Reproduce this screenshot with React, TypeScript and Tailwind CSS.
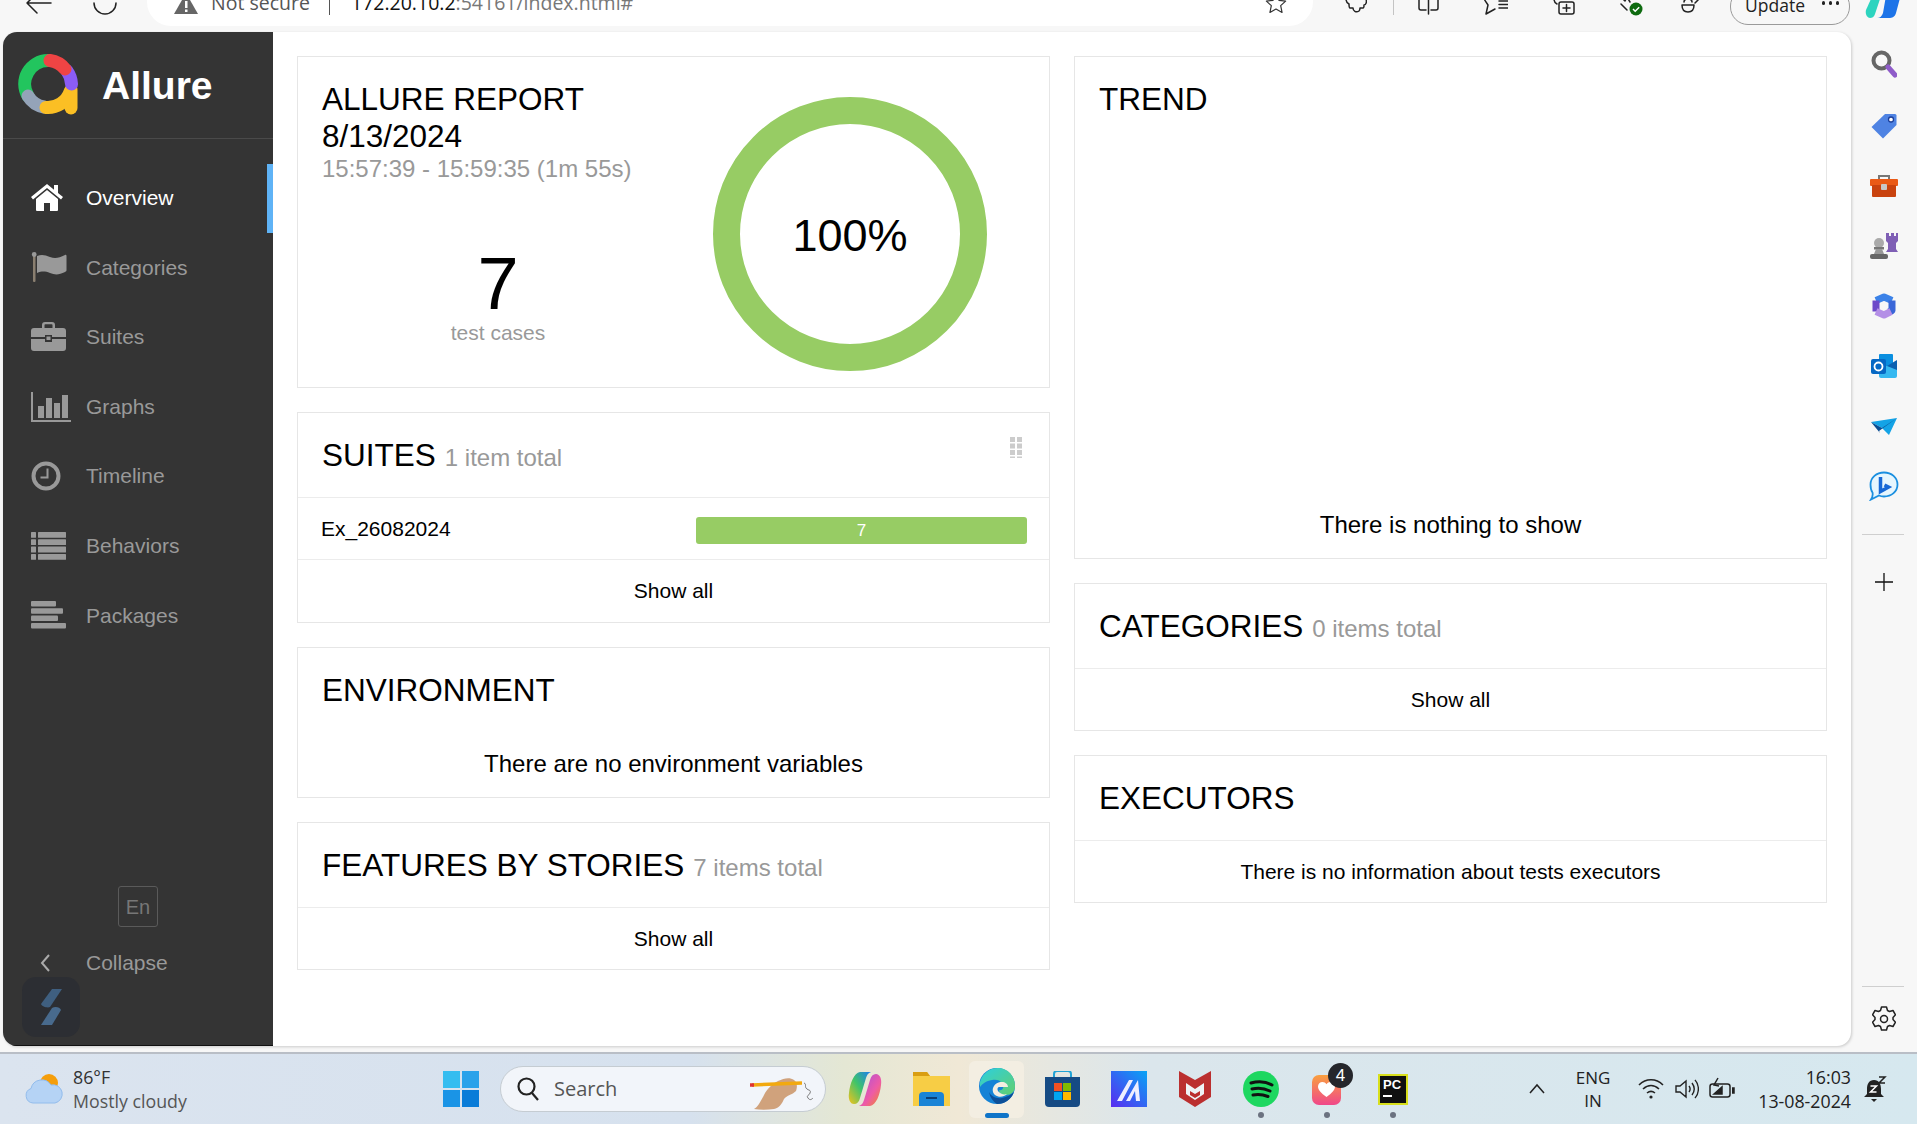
import React from "react";

const Nav = ({ icon, label, active }: { icon: React.ReactNode; label: string; active?: boolean }) => (
  <div className={`relative flex items-center h-[69.6px] pl-[28px] text-[21px] ${active ? "text-white" : "text-[#999]"}`}>
    <div className="w-[55px] flex items-center">{icon}</div>
    <span>{label}</span>
    {active && <div className="absolute right-0 top-[1px] w-[6px] h-[69px] bg-[#5fb3f6]" />}
  </div>
);

const HomeI = () => (
  <svg width="32" height="27" viewBox="0 0 32 27" fill="#fff">
    <path d="M16 6 5 15v11a1 1 0 0 0 1 1h7v-8h6v8h7a1 1 0 0 0 1-1V15z" />
    <path d="M16 0 0 13l2 2.400L16 4l14 11.400 2-2.400-5-4V1h-4v4.800z" />
  </svg>
);
const FlagI = () => (
  <svg width="36" height="30" viewBox="0 0 36 30" fill="#999">
    <rect x="2" y="2" width="2.500" height="28" rx="1" fill="#8a7f70" />
    <circle cx="3.200" cy="2.500" r="2.400" />
    <path d="M6 4c5-2 8-1 13 1 5 1.800 9 1 15-2 1-.4 1.500 0 1.500 1v14c0 1-.5 1.500-1.500 2-6 3-10 3-15 1-5-1.800-8-2-13 0z" />
  </svg>
);
const CaseI = () => (
  <svg width="35" height="29" viewBox="0 0 35 29" fill="#999">
    <path d="M11 6V3a3 3 0 0 1 3-3h7a3 3 0 0 1 3 3v3h-2.500V3a.8.8 0 0 0-.8-.8h-6.400a.8.8 0 0 0-.8.800v3z" />
    <path d="M3 6h29a3 3 0 0 1 3 3v6H21v-2h-7v2H0V9a3 3 0 0 1 3-3z" />
    <path d="M0 17h14v3h7v-3h14v9a3 3 0 0 1-3 3H3a3 3 0 0 1-3-3z" />
    <rect x="15.500" y="14.500" width="4" height="3.500" />
  </svg>
);
const ChartI = () => (
  <svg width="40" height="30" viewBox="0 0 40 30" fill="#999">
    <rect x="0" y="0" width="2" height="30" />
    <rect x="0" y="28" width="40" height="2" />
    <rect x="7" y="14" width="6" height="12" />
    <rect x="15" y="6" width="6" height="20" />
    <rect x="23" y="11" width="6" height="15" />
    <rect x="31" y="3" width="6" height="23" />
  </svg>
);
const ClockI = () => (
  <svg width="30" height="30" viewBox="0 0 30 30" fill="none">
    <circle cx="15" cy="15" r="12.500" stroke="#999" strokeWidth="4" />
    <path d="M16.500 7.500v9h-7" stroke="#999" strokeWidth="2" />
  </svg>
);
const ListI = () => (
  <svg width="35" height="28" viewBox="0 0 35 28" fill="#999">
    {[0, 7.300, 14.600, 21.900].map((y) => (
      <g key={y}>
        <rect x="0" y={y} width="5" height="5.800" rx="0.500" />
        <rect x="7" y={y} width="28" height="5.800" rx="0.500" />
      </g>
    ))}
  </svg>
);
const PackI = () => (
  <svg width="35" height="28" viewBox="0 0 35 28" fill="#999">
    <rect y="0" width="25" height="5.500" rx="1" />
    <rect y="7.300" width="32" height="5.500" rx="1" />
    <rect y="14.600" width="27" height="5.500" rx="1" />
    <rect y="21.900" width="35" height="5.500" rx="1" />
  </svg>
);

const Logo = () => (
  <svg width="60" height="61" viewBox="0 0 60 61" fill="none" strokeWidth="13" strokeLinecap="round">
    <path d="M53 36V54" stroke="#fbbf24" />
    <path d="M10 42A23.500 23.500 0 0 1 30 6.500" stroke="#22c55e" />
    <path d="M10 42A23.500 23.500 0 0 0 26 53" stroke="#94a3b8" />
    <path d="M28 53.500A23.500 23.500 0 0 0 52 38" stroke="#fbbf24" />
    <path d="M53.500 30A23.500 23.500 0 0 0 49 17" stroke="#8b5cf6" />
    <path d="M47 15A23.500 23.500 0 0 0 32 6.500" stroke="#ef4444" />
  </svg>
);

const Card = ({ className = "", children }: { className?: string; children: React.ReactNode }) => (
  <div className={`border border-[#e6e6e6] bg-white ${className}`}>{children}</div>
);

const Head = ({ title, sub, className = "h-[84px]" }: { title: string; sub?: string; className?: string }) => (
  <div className={`flex items-center pl-[24px] ${className}`}>
    <span className="text-[31.500px] leading-[37px] text-black">{title}</span>
    {sub && <span className="ml-[9px] mt-[5px] text-[24px] text-[#999]">{sub}</span>}
  </div>
);

const Foot = ({ children }: { children: React.ReactNode }) => (
  <div className="flex-1 flex items-center justify-center border-t border-[#ececec] text-[21px] text-black">{children}</div>
);

const Rail = ({ y, children }: { y: string; children: React.ReactNode }) => (
  <div className={`flex items-center justify-center ${y}`}>{children}</div>
);

const Slot = ({ className = "", children }: { className?: string; children?: React.ReactNode }) => (
  <div className={`relative shrink-0 flex items-center justify-center ${className}`}>{children}</div>
);

const line = { fill: "none", stroke: "#222", strokeWidth: 1.500, strokeLinecap: "round" as const, strokeLinejoin: "round" as const };

export default function App() {
  return (
    <div className="w-[1917px] h-[1124px] overflow-hidden flex flex-col bg-[#f7f7f7] font-['Liberation_Sans',Arial,sans-serif]">
      {/* browser bar */}
      <div className="h-[32px] shrink-0 flex items-start font-['Open_Sans',sans-serif]">
        <svg className="ml-[26px] shrink-0" width="26" height="14" viewBox="0 0 26 14" {...line}>
          <path d="M25 3H1M11 -7 1 3l10 10" />
        </svg>
        <svg className="ml-[41px] shrink-0" width="24" height="16" viewBox="0 0 24 16" {...line}>
          <path d="M1 3a11 11 0 0 0 22 0" />
        </svg>
        <div className="ml-[30px] w-[1166px] h-[26px] bg-white rounded-b-[24px] flex items-start overflow-hidden shrink-0">
          <svg className="ml-[26px] shrink-0 mt-[-8px]" width="26" height="24" viewBox="0 0 26 24">
            <path d="M13 1 25 22H1z" fill="#666" />
            <rect x="12" y="9" width="2.500" height="7" fill="#fff" />
            <rect x="12" y="17.500" width="2.500" height="2.500" fill="#fff" />
          </svg>
          <span className="ml-[12px] mt-[-10px] w-[100px] text-[19.500px] leading-[26px] text-[#555] whitespace-nowrap shrink-0">Not secure</span>
          <div className="ml-[18px] w-px h-[15px] bg-[#555] shrink-0" />
          <span className="ml-[21px] mt-[-10px] w-[282px] text-[19.500px] leading-[26px] whitespace-nowrap text-[#111] shrink-0">172.20.10.2<span className="text-[#777]">:54161/index.html#</span></span>
          <svg className="ml-[632px] mt-[-7px] shrink-0" width="22" height="22" viewBox="0 0 24 24" fill="none" stroke="#333" strokeWidth="1.300" strokeLinejoin="round">
            <path d="M12 1l3.200 7 7.300.8-5.400 5 1.500 7.400L12 17.500 5.400 21.200 6.900 13.800 1.500 8.800 8.800 8z" />
          </svg>
        </div>
        <svg className="ml-[32px] mt-[-1px] shrink-0" width="22" height="16" viewBox="0 0 22 16" {...line}>
          <path d="M1 0c0 3 1 4 3 5 0 3 0 4 1 4h3c0 3 3 5 6 3 1-1 1-2 1-3h3c1 0 1-2 1-3 2 0 3-3 2-6" />
        </svg>
        <div className="ml-[26px] w-px h-[15px] bg-[#c4c4c4] shrink-0" />
        <svg className="ml-[23px] mt-[-1px] shrink-0" width="23" height="16" viewBox="0 0 23 16" {...line}>
          <path d="M2 0v9a2 2 0 0 0 2 2h5M21 0v9a2 2 0 0 1-2 2h-5M11.500 0v15" />
        </svg>
        <svg className="ml-[44px] mt-[-1px] shrink-0" width="24" height="16" viewBox="0 0 24 16" {...line}>
          <path d="M0 0l4 6-2 9 9-5M15 2h9M15 5.500h9M15 9h9" />
        </svg>
        <svg className="ml-[45px] mt-[-1px] shrink-0" width="22" height="16" viewBox="0 0 22 16" {...line}>
          <rect x="6" y="3" width="15" height="12" rx="2" />
          <path d="M13.500 5.500v7M10 9h7M1 0c0 2 1 4 3 5" />
        </svg>
        <svg className="ml-[41px] mt-[-4px] shrink-0" width="27" height="20" viewBox="0 0 27 20">
          <path d="M1 3l5-1 3 3 2-4 3 5M5 8l6 6" {...line} />
          <circle cx="20" cy="13" r="6.500" fill="#0e6b10" />
          <path d="M17 13l2.200 2.200 4-4" fill="none" stroke="#fff" strokeWidth="1.500" />
        </svg>
        <svg className="ml-[38px] mt-[-1px] shrink-0" width="19" height="16" viewBox="0 0 19 16" {...line}>
          <path d="M1 6h12c0 5-2 7-6 7S1 11 1 6zM3 3c0-4 8-4 8 0M14 4l4-4" />
        </svg>
        <div className="ml-[30px] mt-[-12px] w-[120px] h-[37px] rounded-[18px] border border-[#9a9a9a] flex items-center pl-[14px] shrink-0">
          <span className="text-[17.500px] text-[#222] leading-[22px] mt-[-4px]">Update</span>
          <div className="ml-[17px] mt-[-7px] flex gap-[3.500px]">
            <div className="w-[3.500px] h-[3.500px] rounded-full bg-[#222]" />
            <div className="w-[3.500px] h-[3.500px] rounded-full bg-[#222]" />
            <div className="w-[3.500px] h-[3.500px] rounded-full bg-[#222]" />
          </div>
        </div>
        <svg className="ml-[15px] mt-[-10px] shrink-0" width="37" height="30" viewBox="0 0 37 30">
          <path d="M10 0h8L10 24c-1 3-3 4-5 4-3 0-5-4-4-8z" fill="#2dd4bf" />
          <path d="M22 0h8c4 0 6 4 5 8l-4 15c-1 4-4 5-7 5H12c3 0 5-2 6-5z" fill="#1d74e8" />
        </svg>
      </div>

      {/* main + rail */}
      <div className="h-[1020px] shrink-0 flex items-start">
        <div className="ml-[3px] w-[1848px] h-[1014px] rounded-[14px] bg-white overflow-hidden flex shadow-[1px_1px_3px_rgba(0,0,0,0.18)]">
          {/* sidebar */}
          <div className="relative w-[270px] shrink-0 h-full bg-[#343434] flex flex-col border-b border-[#111]">
            <div className="h-[107px] shrink-0 flex items-center border-b border-[#4a4a4a] pl-[15px]">
              <div className="mt-[-1px]"><Logo /></div>
              <span className="ml-[24px] text-[39px] font-bold text-white leading-none">Allure</span>
            </div>
            <div className="pt-[24px]">
              <Nav active icon={<HomeI />} label="Overview" />
              <Nav icon={<FlagI />} label="Categories" />
              <Nav icon={<CaseI />} label="Suites" />
              <Nav icon={<ChartI />} label="Graphs" />
              <Nav icon={<ClockI />} label="Timeline" />
              <Nav icon={<ListI />} label="Behaviors" />
              <Nav icon={<PackI />} label="Packages" />
            </div>
            <div className="mt-[236px] ml-[115px] w-[40px] h-[41px] rounded-[3px] border border-[#5a5a5a] flex items-center justify-center text-[20px] text-[#777]">En</div>
            <div className="mt-[22px] h-[28px] flex items-center text-[21px] text-[#999]">
              <svg className="ml-[36px] shrink-0" width="12" height="20" viewBox="0 0 12 20" fill="none" stroke="#aaa" strokeWidth="2">
                <path d="M10 2 3 10l7 8" />
              </svg>
              <span className="ml-[35px]">Collapse</span>
            </div>
            <div className="absolute left-[19px] top-[945px] w-[58px] h-[60px] rounded-[14px] bg-[#2c2e33] flex items-center justify-center">
              <svg width="26" height="36" viewBox="0 0 26 36" fill="#3f5f80">
                <path d="M14 0h10L12 18c-2 1-8 0-9-3z" />
                <path d="M14 36H3l11-17c3-2 8-1 9 2z" fill="#486a8d" />
              </svg>
            </div>
          </div>
          {/* content */}
          <div className="flex-1 pt-[24px] pl-[24px] flex gap-[24px] items-start">
            <div className="w-[753px] flex flex-col gap-[24px]">
              <Card className="relative h-[332px]">
                <div className="pl-[24px] pt-[24px] text-[31.500px] leading-[36.500px] text-black">
                  ALLURE REPORT
                  <br />
                  8/13/2024
                  <div className="text-[24px] leading-[28px] mt-[1px] text-[#999]">15:57:39 - 15:59:35 (1m 55s)</div>
                </div>
                <div className="w-[400px] text-center mt-[64px]">
                  <div className="text-[74px] leading-[74px] text-black">7</div>
                  <div className="text-[21px] leading-[24px] text-[#999]">test cases</div>
                </div>
                <div className="absolute left-[415px] top-[40px] w-[274px] h-[274px] rounded-full border-[27px] border-[#97cc64] flex items-center justify-center pt-[4px] text-[45px] text-black">100%</div>
              </Card>
              <Card className="h-[211px] flex flex-col">
                <div className="relative">
                  <Head title="SUITES" sub="1 item total" />
                  <svg className="absolute right-[27px] top-[24px]" width="12" height="24" viewBox="0 0 12 24" fill="#ccc">
                    {[0, 6.500, 13, 19.500].map((y) => (
                      <g key={y}>
                        <rect x="0" y={y} width="5" height={y > 15 ? 1.500 : 5} />
                        <rect x="7" y={y} width="5" height={y > 15 ? 1.500 : 5} />
                      </g>
                    ))}
                  </svg>
                </div>
                <div className="h-[62px] border-t border-[#ececec] flex items-center pl-[23px] pr-[22px] text-[21px] text-black">
                  <span className="w-[375px]">Ex_26082024</span>
                  <div className="flex-1 h-[27px] mt-[4px] rounded-[3px] bg-[#97cc64] flex items-center justify-center text-[17px] text-white">7</div>
                </div>
                <Foot>Show all</Foot>
              </Card>
              <Card className="h-[151px] flex flex-col">
                <Head title="ENVIRONMENT" />
                <div className="text-center text-[24px] leading-[28px] text-black mt-[18px]">There are no environment variables</div>
              </Card>
              <Card className="h-[148px] flex flex-col">
                <Head title="FEATURES BY STORIES" sub="7 items total" />
                <Foot>Show all</Foot>
              </Card>
            </div>
            <div className="w-[753px] flex flex-col gap-[24px]">
              <Card className="h-[503px] flex flex-col">
                <Head title="TREND" />
                <div className="mt-auto mb-[19px] text-center text-[24px] leading-[28px] text-black">There is nothing to show</div>
              </Card>
              <Card className="h-[148px] flex flex-col">
                <Head title="CATEGORIES" sub="0 items total" />
                <Foot>Show all</Foot>
              </Card>
              <Card className="h-[148px] flex flex-col">
                <Head title="EXECUTORS" />
                <Foot>There is no information about tests executors</Foot>
              </Card>
            </div>
          </div>
        </div>

        {/* right rail */}
        <div className="w-[66px] shrink-0 h-[1014px] flex flex-col">
          <Rail y="h-[30px] mt-[17px]">
            <svg width="26" height="28" viewBox="0 0 26 28" fill="none">
              <circle cx="10.500" cy="10.500" r="8" stroke="#666" strokeWidth="4" />
              <path d="M17 17l7 8" stroke="#8f5cc9" strokeWidth="5" strokeLinecap="round" />
            </svg>
          </Rail>
          <Rail y="h-[30px] mt-[32px]">
            <svg width="26" height="26" viewBox="0 0 26 26">
              <path d="M14 1h10a1.500 1.500 0 0 1 1.500 1.500V12L12 25.500 .5 14z" fill="#4f83e3" />
              <circle cx="20" cy="6.500" r="2.500" fill="#fff" stroke="#1d3f9a" strokeWidth="1.300" />
            </svg>
          </Rail>
          <Rail y="h-[30px] mt-[30px]">
            <svg width="28" height="24" viewBox="0 0 28 24">
              <path d="M9 6V2h10v4" fill="none" stroke="#777" strokeWidth="2" />
              <rect y="5" width="28" height="7" rx="1" fill="#ea5a16" />
              <rect x="2" y="11" width="24" height="12" rx="1" fill="#c9430f" />
              <rect x="11" y="10" width="6" height="6" rx="1" fill="#c8c8c8" />
            </svg>
          </Rail>
          <Rail y="h-[30px] mt-[30px]">
            <svg width="28" height="26" viewBox="0 0 28 26">
              <path d="M16 0h3v3h2V0h3v3h2V0h2v8l-2 2v6l2 3H16l2-3v-6l-2-2z" fill="#7f5fb5" />
              <circle cx="9" cy="10" r="5" fill="#aaa" />
              <rect x="4" y="14" width="10" height="2.500" fill="#777" />
              <path d="M6 16h6l2 5H4z" fill="#999" />
              <rect x="0" y="21" width="18" height="5" rx="2" fill="#666" />
            </svg>
          </Rail>
          <Rail y="h-[30px] mt-[30px]">
            <svg width="26" height="26" viewBox="0 0 26 26" fill="none" strokeWidth="7" strokeLinejoin="round">
              <path d="M5 7.500 13 4l8 3.500" stroke="#3b82e8" />
              <path d="M21 7.500v10l-3 1.500" stroke="#3a66d8" />
              <path d="M5 18.500V7.500" stroke="#6d49c9" />
              <path d="M5 18.500 13 22l7-3.500" stroke="#b48fe6" />
            </svg>
          </Rail>
          <Rail y="h-[30px] mt-[30px]">
            <svg width="26" height="24" viewBox="0 0 26 24">
              <rect x="8" y="0" width="14" height="22" rx="1" fill="#0a8fe0" />
              <path d="M8 12h18v10a2 2 0 0 1-2 2H10a2 2 0 0 1-2-2z" fill="#35b8f0" />
              <path d="M16 12l10-6v10z" fill="#0a5fb0" />
              <rect x="0" y="5" width="15" height="15" rx="2" fill="#0668c4" />
              <circle cx="7.500" cy="12.500" r="4" fill="none" stroke="#fff" strokeWidth="1.800" />
            </svg>
          </Rail>
          <Rail y="h-[30px] mt-[30px]">
            <svg className="mt-[2px]" width="26" height="18" viewBox="0 0 26 18">
              <path d="M0 4 26 0l-8 17-7-7z" fill="#14a3e6" />
              <path d="M0 4l11 6 15-10-18 13 1 2z" fill="#0b4e93" />
            </svg>
          </Rail>
          <Rail y="h-[30px] mt-[30px]">
            <svg width="30" height="30" viewBox="0 0 30 30" fill="none">
              <path d="M15 1.500c7.500 0 13.500 5 13.500 12s-6 12-13.500 12c-2 0-3.500-.3-5-1L2 28.500c1.500-2.500 2-5 1.500-7C2 19.500 1.500 16 1.500 13.500 1.500 6.500 7.500 1.500 15 1.500z" fill="#e6f6fe" stroke="#1a8fe0" strokeWidth="1.800" />
              <path d="M11.500 6v14.500l8-4.500-4-2" stroke="#1668d6" strokeWidth="3.500" />
            </svg>
          </Rail>
          <div className="ml-[11px] mt-[33px] w-[42px] h-px bg-[#cfcfcf]" />
          <Rail y="h-[30px] mt-[32px]">
            <svg width="20" height="20" viewBox="0 0 20 20" stroke="#111" strokeWidth="1.300"><path d="M10 1v18M1 10h18" /></svg>
          </Rail>
          <div className="ml-[11px] mt-[389px] w-[42px] h-px bg-[#cfcfcf]" />
          <Rail y="h-[30px] mt-[17px]">
            <svg width="24" height="26" viewBox="0 0 24 26" fill="none" stroke="#222" strokeWidth="1.500" strokeLinejoin="round">
              <path d="M9.500 1h5l1 3.500 2 1 3.500-1 2.500 4.300-2.500 2.600v2.200l2.500 2.600-2.500 4.300-3.500-1-2 1-1 3.500h-5l-1-3.500-2-1-3.500 1L.5 16.200 3 13.600v-2.200L.5 8.800 3 4.500l3.500 1 2-1z" />
              <circle cx="12" cy="13" r="3.500" />
            </svg>
          </Rail>
        </div>
      </div>

      {/* taskbar */}
      <div className="h-[72px] shrink-0 border-t-[2px] border-[#b9bec6] flex items-center bg-[linear-gradient(90deg,#dbe4ef_0%,#d6e1ee_36%,#e4e7d4_44%,#f0e8d6_50%,#dbe6ec_60%,#d6e8ef_100%)] font-['Open_Sans',sans-serif]">
        <Slot className="w-[38px] h-[30px] ml-[25px]">
          <svg width="38" height="30" viewBox="0 0 38 30">
            <circle cx="24" cy="9" r="9" fill="#f59e0b" />
            <path d="M8 29a7.500 7.500 0 0 1-2-14.500A11 11 0 0 1 26 11a9 9 0 0 1 4 18z" fill="#b5d3f5" stroke="#92bcec" />
          </svg>
        </Slot>
        <div className="ml-[10px] w-[120px] text-[17.800px] leading-[24px] text-[#333] whitespace-nowrap">
          <div>86°F</div>
          <div className="text-[#555]">Mostly cloudy</div>
        </div>
        <Slot className="ml-[250px] w-[36px] h-[36px]">
          <svg width="36" height="36" viewBox="0 0 36 36">
            <rect x="0" y="0" width="17" height="17" fill="#35bdf0" />
            <rect x="19" y="0" width="17" height="17" fill="#2aa2ea" />
            <rect x="0" y="19" width="17" height="17" fill="#1a94e6" />
            <rect x="19" y="19" width="17" height="17" fill="#0a7cd8" />
          </svg>
        </Slot>
        <div className="ml-[21px] w-[326px] h-[46px] rounded-[23px] bg-[#f2f5fa] border border-[#c5ccd2] flex items-center relative shrink-0">
          <svg className="ml-[15px] shrink-0" width="24" height="26" viewBox="0 0 24 26" fill="none" stroke="#222" strokeWidth="2.200">
            <circle cx="10.500" cy="10.500" r="8" />
            <path d="M16 17l6 7" />
          </svg>
          <span className="ml-[14px] text-[20px] text-[#555]">Search</span>
          <svg className="absolute left-[249px] top-[6px]" width="72" height="38" viewBox="0 0 72 38">
            <path d="M4 36c3-1 7-8 10-14 3-6 8-11 14-14 6-3 12-4 16-1 4 3 3 8 2 11-4 4-9 4-12 8-2 5-5 9-10 10-7 1-14 1-20 0z" fill="#d0a27c" />
            <path d="M2 12 52 10" stroke="#f2a90f" strokeWidth="3.500" />
            <path d="M0 12h4" stroke="#d33" strokeWidth="3.500" />
            <path d="M54 10c3 1 0 4 3 6s4 1 3 4-4 2-2 5 4 1 5 0" fill="none" stroke="#777" />
          </svg>
        </div>
        <Slot className="ml-[21px] w-[36px] h-[36px]">
          <svg width="36" height="36" viewBox="0 0 36 36">
            <defs>
              <linearGradient id="cp" x1="0" y1="0" x2="1" y2="1">
                <stop offset="0" stopColor="#a34fe0" />
                <stop offset="0.600" stopColor="#ee5ba6" />
                <stop offset="1" stopColor="#f08a24" />
              </linearGradient>
              <linearGradient id="cq" x1="0" y1="1" x2="1" y2="0">
                <stop offset="0" stopColor="#f4c21c" />
                <stop offset="0.500" stopColor="#3fc46a" />
                <stop offset="1" stopColor="#1d7cf0" />
              </linearGradient>
            </defs>
            <path d="M13 1h11c-3 1-4 3-5 6l-6 20c-1 4-3 6-6 6-4 0-6-5-5-11C3 12 7 2 13 1z" fill="url(#cq)" />
            <path d="M23 35H12c3-1 4-3 5-6l6-20c1-4 3-6 6-6 4 0 6 5 5 11-1 10-5 20-11 21z" fill="url(#cp)" />
          </svg>
        </Slot>
        <Slot className="ml-[30px] w-[37px] h-[34px]">
          <svg width="37" height="34" viewBox="0 0 37 34">
            <path d="M0 0h14l3 4h20v30H0z" fill="#f7cd45" />
            <path d="M0 0h14l3 4H0z" fill="#d99e12" />
            <path d="M6 24a4 4 0 0 1 4-4h17a4 4 0 0 1 4 4v10H6z" fill="#1a84d6" />
            <rect x="13" y="25" width="11" height="2" fill="#0c3f75" />
          </svg>
        </Slot>
        <div className="ml-[19px] w-[55px] h-[57px] rounded-[6px] bg-[#f3eee2] relative flex items-center justify-center shrink-0">
          <svg width="38" height="38" viewBox="0 0 38 38" className="mt-[-6px]">
            <defs>
              <linearGradient id="eg" x1="0" y1="0" x2="1" y2="1">
                <stop offset="0" stopColor="#2ccfe0" />
                <stop offset="1" stopColor="#62cf6e" />
              </linearGradient>
            </defs>
            <circle cx="19" cy="19" r="18" fill="#1583d6" />
            <path d="M19 37a18 18 0 0 1-8-12c2 4 7 7 13 6 5-1 9-3 12-6a18 18 0 0 1-17 12z" fill="#0c4f98" />
            <path d="M2 15C5 5 13 1 20 1c10 0 17 8 17 18 0 6-4 9-9 9-4 0-7-2-7-5 3 1 6-2 3-7-2-3-6-4-10-3-6 1-10 4-12 7z" fill="url(#eg)" />
            <path d="M24 15c3 0 6 2 6 5h-9c-2 0-2 4 0 5 2 2 5 3 8 2-3 3-8 4-12 1-5-5-1-13 7-13z" fill="#f3eee2" />
          </svg>
          <div className="absolute bottom-0 left-[16px] w-[24px] h-[5px] rounded-[3px] bg-[#0f74c8]" />
        </div>
        <Slot className="ml-[21px] w-[35px] h-[36px]">
          <svg width="35" height="36" viewBox="0 0 35 36">
            <path d="M9 8V3a3 3 0 0 1 3-3h11a3 3 0 0 1 3 3v5" fill="none" stroke="#21a3d6" strokeWidth="2" />
            <path d="M0 6h35v26a4 4 0 0 1-4 4H4a4 4 0 0 1-4-4z" fill="#164b84" />
            <rect x="9" y="12" width="8" height="8" fill="#f25022" />
            <rect x="18" y="12" width="8" height="8" fill="#7fba00" />
            <rect x="9" y="21" width="8" height="8" fill="#00a4ef" />
            <rect x="18" y="21" width="8" height="8" fill="#ffb900" />
          </svg>
        </Slot>
        <Slot className="ml-[31px] w-[36px] h-[36px]">
          <svg width="36" height="36" viewBox="0 0 36 36">
            <defs>
              <linearGradient id="mm" x1="0" y1="1" x2="1" y2="0">
                <stop offset="0" stopColor="#5a2bf0" />
                <stop offset="1" stopColor="#08a4f5" />
              </linearGradient>
            </defs>
            <rect width="36" height="36" fill="url(#mm)" />
            <path d="M6 30 18 9h4L11 30zM15 30 27 9l2 21h-4l-1-10-5 10z" fill="#eef" />
          </svg>
        </Slot>
        <Slot className="ml-[32px] w-[32px] h-[36px]">
          <svg width="32" height="36" viewBox="0 0 32 36">
            <path d="M0 0l16 9 16-9v26L16 36 0 26z" fill="#bb2f2f" />
            <path d="M7 12l9 6 9-6v11l-9 6-9-6z" fill="#eef3f6" />
            <path d="M11 20l5 3 5-3v4l-5 3-5-3z" fill="#bb2f2f" />
          </svg>
        </Slot>
        <Slot className="ml-[32px] w-[36px] h-[36px]">
          <svg width="36" height="36" viewBox="0 0 36 36" fill="none">
            <circle cx="18" cy="18" r="18" fill="#1ed760" />
            <path d="M8 12c7-2 14-2 21 2M9 18c6-1.500 12-1 18 2M10 24c5-1 10-.5 15 1.500" stroke="#111" strokeWidth="3" strokeLinecap="round" />
          </svg>
          <div className="absolute left-[15px] top-[41px] w-[6px] h-[6px] rounded-full bg-[#6b7280]" />
        </Slot>
        <Slot className="ml-[33px] w-[29px] h-[30px] mt-[2px]">
          <div className="w-[29px] h-[30px] rounded-[7px] bg-[linear-gradient(180deg,#f9a03f,#f0478a)] flex items-center justify-center">
            <svg width="17" height="16" viewBox="0 0 17 16" fill="#fff"><path d="M8.500 15C3 11 0 8 0 4.500 0 2 2 0 4.500 0 6 0 7.500.8 8.500 2.200 9.500.8 11 0 12.500 0 15 0 17 2 17 4.500 17 8 14 11 8.500 15z" /></svg>
          </div>
          <div className="absolute left-[16px] top-[-12px] w-[25px] h-[25px] rounded-full bg-[#25262b] flex items-center justify-center text-[17px] text-white font-['Liberation_Sans',sans-serif]">4</div>
          <div className="absolute left-[12px] top-[37px] w-[6px] h-[6px] rounded-full bg-[#6b7280]" />
        </Slot>
        <Slot className="ml-[37px] w-[30px] h-[31px]">
          <div className="w-[30px] h-[31px] bg-[#101010] border-[2px] border-[#d8df1c] flex flex-col pl-[3px] pt-[1px] font-['Liberation_Sans',sans-serif] text-[13px] leading-[15px] font-bold text-white">
            PC
            <div className="w-[9px] h-[2px] bg-white mt-[3px]" />
          </div>
          <div className="absolute left-[12px] top-[38px] w-[6px] h-[6px] rounded-full bg-[#6b7280]" />
        </Slot>
        <Slot className="ml-[120px] w-[18px] h-[12px]">
          <svg width="18" height="12" viewBox="0 0 18 12" fill="none" stroke="#222" strokeWidth="1.500"><path d="M2 10l7-8 7 8" /></svg>
        </Slot>
        <div className="ml-[24px] w-[46px] text-center text-[17px] leading-[23px] text-[#222]">
          ENG
          <br />
          IN
        </div>
        <Slot className="ml-[22px] w-[26px] h-[26px]">
          <svg width="26" height="22" viewBox="0 0 26 22" fill="none" stroke="#222" strokeWidth="1.600">
            <path d="M1 7c7-7 17-7 24 0M5 11c5-4.500 11-4.500 16 0M9 15c2.500-2 5.500-2 8 0" />
            <circle cx="13" cy="19" r="1.600" fill="#222" stroke="none" />
          </svg>
        </Slot>
        <Slot className="ml-[11px] w-[24px] h-[26px]">
          <svg width="24" height="20" viewBox="0 0 24 20" fill="none" stroke="#222" strokeWidth="1.400">
            <path d="M1 7h4l6-5v16l-6-5H1zM14 7c1.500 2 1.500 4 0 6M17 4c3 4 3 8 0 12M20 1c4.500 5 4.500 13 0 18" />
          </svg>
        </Slot>
        <Slot className="ml-[10px] w-[26px] h-[26px]">
          <svg width="26" height="24" viewBox="0 0 26 24" fill="none" stroke="#222" strokeWidth="1.500">
            <rect x="1" y="7" width="20" height="13" rx="2.500" />
            <path d="M5 17l8-7v7z" fill="#222" />
            <path d="M23 11h2v5h-2" fill="#222" />
            <path d="M9 1 5 8l5 1" />
          </svg>
        </Slot>
        <div className="ml-[21px] w-[95px] text-right text-[17.800px] leading-[24px] text-[#222] whitespace-nowrap">
          16:03
          <br />
          13-08-2024
        </div>
        <Slot className="ml-[12px] w-[24px] h-[30px]">
          <svg width="24" height="30" viewBox="0 0 24 30">
            <path d="M11 6c5 0 7 4 7 9v5l3 3H1l3-3v-5c0-5 2-9 7-9z" fill="#222" />
            <path d="M8 25h6l-3 3z" fill="#222" />
            <path d="M7.500 12h6l-6 6h6" fill="none" stroke="#fff" strokeWidth="1.500" />
            <path d="M16 3h6l-6 6h6" fill="none" stroke="#222" strokeWidth="1.500" />
          </svg>
        </Slot>
      </div>
    </div>
  );
}
